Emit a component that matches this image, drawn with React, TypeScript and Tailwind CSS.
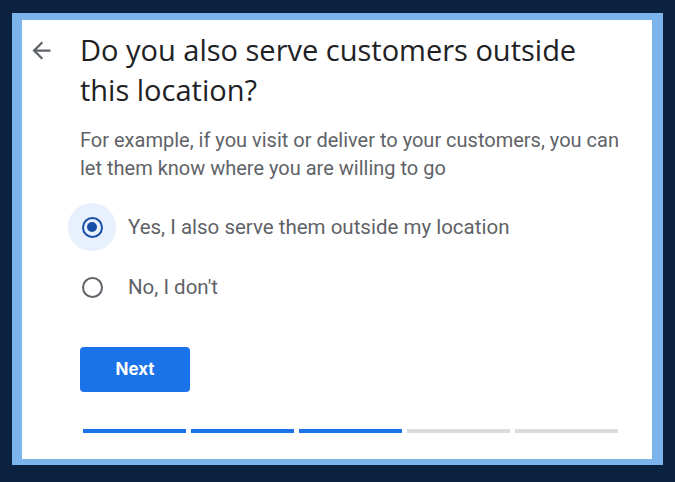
import { useState } from 'react';

const options = [
  { id: 'yes', label: 'Yes, I also serve them outside my location' },
  { id: 'no', label: "No, I don't" },
];

export default function App() {
  const [choice, setChoice] = useState('yes');
  const steps = [true, true, true, false, false];

  return (
    <div className="w-[675px] h-[482px] bg-[#0b2341] pt-[13px] pl-[12px] pr-[12px] pb-[17px]">
      <div className="h-full bg-[#7cb5ec] pt-[7px] pl-[10px] pr-[11px] pb-[6px]">
        <div className="h-full bg-white flex pt-[10px]">
          <div className="w-[58px] shrink-0 pt-[7px] pl-[6px]">
            <svg width="27" height="27" viewBox="0 0 24 24" fill="#5f6368">
              <path d="M20 11H7.83l5.59-5.59L12 4l-8 8 8 8 1.41-1.41L7.83 13H20v-2z" />
            </svg>
          </div>
          <div className="flex flex-col">
            <h1 className="text-[29px] leading-[40px] text-[#202124] font-normal font-['Open_Sans',sans-serif]">
              Do you also serve customers outside
              <br />
              this location?
            </h1>
            <p className="mt-[16px] text-[20px] leading-[28px] text-[#5f6368] font-['Roboto',sans-serif] w-[560px] whitespace-nowrap">
              For example, if you visit or deliver to your customers, you can
              <br />
              let them know where you are willing to go
            </p>
            <div className="mt-[21px] -ml-3 flex flex-col gap-[12px]">
              {options.map((o) => (
                <button
                  key={o.id}
                  onClick={() => setChoice(o.id)}
                  className="flex items-center gap-[12px] text-left"
                >
                  <span
                    className={`w-[48px] h-[48px] rounded-full flex items-center justify-center ${choice === o.id ? 'bg-[#e8f0fe]' : ''}`}
                  >
                    <span
                      className={`w-[21px] h-[21px] rounded-full border-[2.5px] flex items-center justify-center ${choice === o.id ? 'border-[#174ea6]' : 'border-[#5f6368]'}`}
                    >
                      {choice === o.id && <span className="w-[10px] h-[10px] rounded-full bg-[#174ea6]" />}
                    </span>
                  </span>
                  <span className="text-[20.5px] text-[#5f6368] font-['Roboto',sans-serif]">{o.label}</span>
                </button>
              ))}
            </div>
            <button className="mt-[36px] w-[110px] h-[45px] rounded-[4px] bg-[#1a73e8] text-white text-[17px] font-bold font-['Inter',sans-serif]">
              Next
            </button>
            <div className="mt-[37px] ml-[3px] flex gap-[5px]">
              {steps.map((done, i) => (
                <div key={i} className={`w-[103px] h-[4px] ${done ? 'bg-[#1a73e8]' : 'bg-[#dadce0]'}`} />
              ))}
            </div>
          </div>
        </div>
      </div>
    </div>
  );
}
